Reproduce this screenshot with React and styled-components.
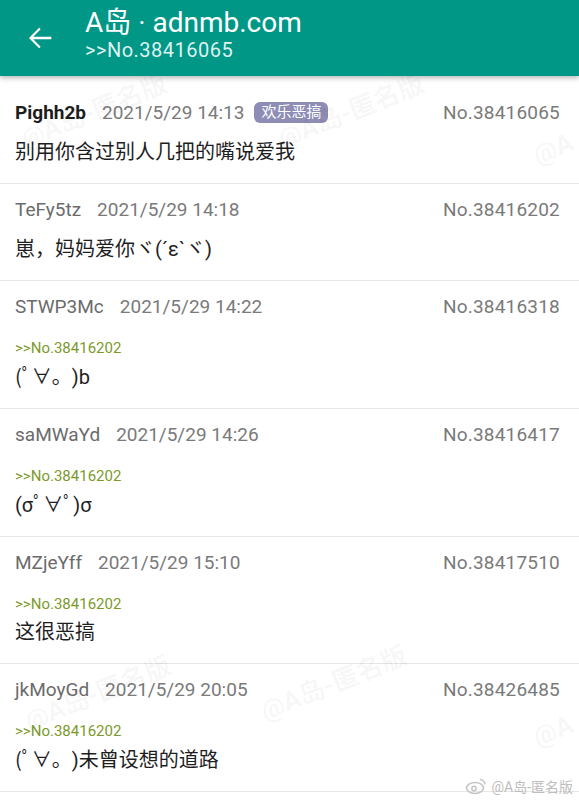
import React from 'react'
import styled, { createGlobalStyle } from 'styled-components'

const posts = [
    { id: 'Pighh2b', time: '2021/5/29 14:13', no: '38416065', tag: '欢乐恶搞', op: true, text: '别用你含过别人几把的嘴说爱我' },
    { id: 'TeFy5tz', time: '2021/5/29 14:18', no: '38416202', text: '崽，妈妈爱你ヾ(´ε`ヾ)' },
    { id: 'STWP3Mc', time: '2021/5/29 14:22', no: '38416318', ref: '38416202', text: '(ﾟ∀。)b' },
    { id: 'saMWaYd', time: '2021/5/29 14:26', no: '38416417', ref: '38416202', text: '(σﾟ∀ﾟ)σ' },
    { id: 'MZjeYff', time: '2021/5/29 15:10', no: '38417510', ref: '38416202', text: '这很恶搞' },
    { id: 'jkMoyGd', time: '2021/5/29 20:05', no: '38426485', ref: '38416202', text: '(ﾟ∀。)未曾设想的道路' },
]

// watermark spots, they sit over the list
const marks = [
    { x: 28, y: 118, t: '@A岛-匿名版' }, { x: 285, y: 118, t: '@A岛-匿名版' }, { x: 540, y: 140, t: '@A' },
    { x: 32, y: 700, t: '@A岛-匿名版' }, { x: 268, y: 690, t: '@A岛-匿名版' }, { x: 540, y: 722, t: '@A' },
]

// the phone draws ∀ and 。 a full cell wide
const renderText = (text) =>
    text.split(/([∀。])/).map((part, i) =>
        part === '∀' || part === '。' ? <Wide key={i} $left={part === '。'}>{part}</Wide> : part
    )

const App = () => {
    return (
        <Page>
            <Global />
            <Toolbar>
                <BackButton>
                    <svg width="34" height="34" viewBox="0 0 24 24">
                        <path fill="#fff" d="M20 11.2H7.2l5.3-5.3-1.1-1.1L4.2 12l7.2 7.2 1.1-1.1-5.3-5.3H20z" />
                    </svg>
                </BackButton>
                <Titles>
                    <Title>A岛 · adnmb.com</Title>
                    <Subtitle>&gt;&gt;No.38416065</Subtitle>
                </Titles>
            </Toolbar>
            <List>
                {posts.map((p) => (
                    <Item key={p.no}>
                        <Meta>
                            <UserId $op={p.op}>{p.id}</UserId>
                            <Time>{p.time}</Time>
                            {p.tag && <Tag>{p.tag}</Tag>}
                            <No>No.{p.no}</No>
                        </Meta>
                        {p.ref && <Ref>&gt;&gt;No.{p.ref}</Ref>}
                        <Content $hasRef={!!p.ref}>{renderText(p.text)}</Content>
                    </Item>
                ))}
            </List>
            {marks.map((m, i) => (
                <Watermark key={i} style={{ left: m.x, top: m.y }}>{m.t}</Watermark>
            ))}
            <Signature>
                <svg width="22" height="18" viewBox="0 0 22 18">
                    <ellipse cx="10" cy="11" rx="8.5" ry="5.5" fill="none" stroke="#c4c4c4" strokeWidth="1.6" />
                    <circle cx="9" cy="11.5" r="2.2" fill="none" stroke="#c4c4c4" strokeWidth="1.4" />
                    <path d="M15 2.5a5 5 0 0 1 5 5" fill="none" stroke="#c4c4c4" strokeWidth="1.4" />
                </svg>
                @A岛-匿名版
            </Signature>
        </Page>
    )
}

export default App

const Global = createGlobalStyle`
    body{
        margin: 0;
        background: #fff;
        font-family: Roboto, "Noto Sans CJK SC", sans-serif;
    }
`
const Page = styled.div`
    width: 579px;
    height: 800px;
    position: relative;
    overflow: hidden;
    background: #fff;
`
const Toolbar = styled.div`
    height: 76px;
    background-color: #009787;
    display: flex;
    align-items: center;
    box-shadow: 0 2px 5px rgba(0, 0, 0, 0.28);
    position: relative;
    z-index: 1;
`
const BackButton = styled.div`
    width: 80px;
    display: flex;
    justify-content: center;
    margin-right: 5px;
`
const Titles = styled.div`
    display: flex;
    flex-direction: column;
    color: #fff;
    margin-top: -6px;
`
const Title = styled.div`
    font-size: 28px;
    line-height: 30px;
`
const Subtitle = styled.div`
    font-size: 20px;
    line-height: 24px;
    letter-spacing: 0.5px;
    color: #dff2ef;
`
const List = styled.div`
    padding-top: 11px;
`
const Item = styled.div`
    padding: 13px 19px 17px 15px;
    border-bottom: 1px solid #e6e6e6;
`
const Meta = styled.div`
    display: flex;
    align-items: center;
    height: 24px;
    font-size: 19px;
`
const UserId = styled.span`
    color: ${(p) => (p.$op ? '#1d1d1d' : '#6b6b6b')};
    font-weight: ${(p) => (p.$op ? 700 : 400)};
    margin-right: 16px;
`
const Time = styled.span`
    color: #7a7a7a;
`
const Tag = styled.span`
    background: #8d8db5;
    color: #fff;
    font-size: 15px;
    line-height: 21px;
    padding: 0 7px;
    border-radius: 6px;
    margin-left: 10px;
`
const No = styled.span`
    margin-left: auto;
    color: #7a7a7a;
    letter-spacing: 0.2px;
`
const Ref = styled.div`
    margin-top: 20px;
    font-size: 15px;
    line-height: 20px;
    color: #7c9a2c;
`
const Content = styled.div`
    margin-top: ${(p) => (p.$hasRef ? '4px' : '14px')};
    font-size: 20px;
    line-height: 28px;
    color: #1e1e1e;
`
const Wide = styled.span`
    display: inline-block;
    width: 1em;
    text-align: ${(p) => (p.$left ? 'left' : 'center')};
    font-family: "Noto Sans CJK SC", sans-serif;
`
const Watermark = styled.div`
    position: absolute;
    font-size: 26px;
    font-weight: 700;
    color: rgba(0, 0, 0, 0.045);
    transform: rotate(-22deg);
    transform-origin: left bottom;
    white-space: nowrap;
    pointer-events: none;
`
const Signature = styled.div`
    position: absolute;
    right: 6px;
    bottom: 4px;
    display: flex;
    align-items: center;
    gap: 4px;
    font-size: 14px;
    color: #bdbdbd;
`
